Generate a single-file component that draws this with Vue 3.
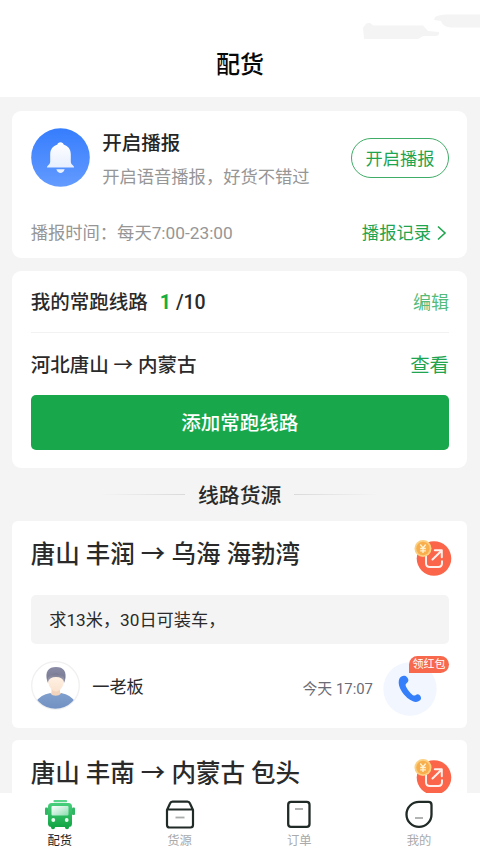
<script setup>
const loads = [
  { route: '唐山 丰润 → 乌海 海勃湾', note: '求13米，30日可装车，', name: '一老板', time: '今天 17:07' },
  { route: '唐山 丰南 → 内蒙古 包头', note: '', name: '', time: '' },
]
</script>

<template>
  <div class="screen">
    <header class="header">
      <svg class="smudge" width="118" height="30" viewBox="0 0 118 30">
        <path d="M73 3Q77 .5 84 .5H118V13.500H89Q81 13 79 7L72 6ZM3 11Q4 8.500 8 9L11 11.500H61L66 17L77 18Q78 21 74 22L61 22L56 25H2L1 14Z" fill="#f4f4f4" />
      </svg>
      <h1>配货</h1>
    </header>

    <main class="content">
      <section class="card broadcast">
        <div class="broadcast-top">
          <svg class="bell" width="59" height="59" viewBox="0 0 59 59">
            <defs>
              <linearGradient id="bellBg" x1="0" y1="0" x2="0" y2="1">
                <stop offset="0" stop-color="#367dfd" /><stop offset="1" stop-color="#639bff" />
              </linearGradient>
              <linearGradient id="bellFg" x1="0" y1="0" x2="0" y2="1">
                <stop offset="0" stop-color="#fff" /><stop offset="1" stop-color="#e7efff" />
              </linearGradient>
            </defs>
            <circle cx="29.500" cy="29.500" r="29.300" fill="url(#bellBg)" />
            <path d="M29.500 14.300c-1.700 0-2.800.9-3.100 2.300-4.600 1.400-7.200 5-7.200 9.600v7.300c0 1.800-.9 2.700-1.900 3.700-.9.800-1.300 1.400-1.400 2.200h27.200c-.1-.8-.5-1.400-1.400-2.200-1-1-1.900-1.900-1.900-3.700v-7.300c0-4.600-2.600-8.200-7.200-9.600-.3-1.400-1.400-2.300-3.100-2.300z" fill="url(#bellFg)" />
            <path d="M25.400 41.200h8.200c-.7 2.500-2.300 3.700-4.100 3.700s-3.400-1.200-4.100-3.700z" fill="#e9f0ff" />
          </svg>
          <div class="broadcast-copy">
            <h2>开启播报</h2>
            <p>开启语音播报，好货不错过</p>
          </div>
          <button class="pill">开启播报</button>
        </div>
        <div class="broadcast-foot">
          <span>播报时间：每天7:00-23:00</span>
          <a class="record">播报记录
            <svg width="10" height="16" viewBox="0 0 10 16"><path d="M1 1.500L8 8L1 14.500" fill="none" stroke="#1fa44f" stroke-width="1.600" /></svg>
          </a>
        </div>
      </section>

      <section class="card routes">
        <div class="routes-head">
          <h2>我的常跑线路<b>1</b><span>/10</span></h2>
          <a class="edit">编辑</a>
        </div>
        <div class="route-row">
          <span>河北唐山 → 内蒙古</span>
          <a>查看</a>
        </div>
        <button class="add">添加常跑线路</button>
      </section>

      <div class="divider"><i class="left"></i><h3>线路货源</h3><i class="right"></i></div>

      <article v-for="(load, i) in loads" :key="i" class="card load">
        <div class="load-head">
          <h2>{{ load.route }}</h2>
          <svg class="share" width="38" height="38" viewBox="0 0 38 38">
            <circle cx="20" cy="20.500" r="17.300" fill="#fb664a" />
            <path d="M12 17v8.300q0 3.700 3.700 3.700h8.600q3.700 0 3.700-3.700v-2" fill="none" stroke="#fff0ec" stroke-width="2" stroke-linecap="round" />
            <path d="M18.500 21.500L27.500 12.700M20.800 12.300h7v7" fill="none" stroke="#fff0ec" stroke-width="2" stroke-linecap="round" stroke-linejoin="round" />
            <circle cx="9" cy="10.500" r="8.500" fill="#fbd080" />
            <circle cx="9" cy="10.500" r="6.700" fill="#f9ae4d" />
            <path d="M6.300 6.500L9 10L11.700 6.500M9 10v5M6.200 10.500h5.600M6.200 12.800h5.600" fill="none" stroke="#fff3d3" stroke-width="1.300" />
          </svg>
        </div>
        <template v-if="load.name">
          <p class="note">{{ load.note }}</p>
          <div class="owner">
            <svg class="avatar" width="49" height="49" viewBox="0 0 49 49">
              <defs>
                <clipPath id="face"><circle cx="24.500" cy="24.500" r="23.300" /></clipPath>
                <linearGradient id="shirt" x1="0" y1="0" x2="0" y2="1"><stop offset="0" stop-color="#7f9fcd" /><stop offset="1" stop-color="#7190c2" /></linearGradient>
                <linearGradient id="hair" x1="0" y1="0" x2="0" y2="1"><stop offset="0" stop-color="#8a8ba6" /><stop offset="1" stop-color="#75778f" /></linearGradient>
                <linearGradient id="band" x1="0" y1="0" x2="0" y2="1"><stop offset="0" stop-color="#77788f" /><stop offset="1" stop-color="#a9a8bd" /></linearGradient>
                <linearGradient id="skin" x1="0" y1="0" x2="0" y2="1"><stop offset="0" stop-color="#fff1e3" /><stop offset="1" stop-color="#fae3cf" /></linearGradient>
              </defs>
              <circle cx="24.500" cy="24.500" r="23.800" fill="#fff" stroke="#f0f0f0" stroke-width="1.300" />
              <g clip-path="url(#face)">
                <path d="M4 42Q9 33.500 19.500 32L24.500 33.500L30 32Q40 33.500 45 42V49H4Z" fill="url(#shirt)" />
                <path d="M20.500 27h8.500v4.300l1 1.500Q28 34.800 24.700 34.800T19.500 32.800l1-1.500z" fill="#f3d5bd" />
                <path d="M16.300 20.500C13.500 10.500 17.500 6 25 6S36.500 10.500 33.700 20.500Z" fill="url(#hair)" />
                <path d="M16.500 21.500Q14.800 14 25 12.300Q35.200 14 33.500 21.500Z" fill="url(#band)" />
                <path d="M17 21Q18.500 16 25 16T33 21Q32.300 25.500 29.300 28.500Q25 32.500 20.700 28.500Q17.700 25.500 17 21Z" fill="url(#skin)" />
              </g>
            </svg>
            <span class="name">{{ load.name }}</span>
            <span class="time">{{ load.time }}</span>
            <div class="call">
              <svg width="54" height="54" viewBox="0 0 54 54">
                <circle cx="27" cy="27" r="26.700" fill="#f2f6ff" />
                <path d="M16.500 16.400C18.300 13.500 22 12.800 24 15.300C26.500 18.400 25.200 20 23.300 21.600C22.300 22.500 22.500 23.800 23.200 25.100C24.800 28.200 26.900 31 29.600 32.900C30.700 33.700 31.700 33.600 32.900 32.900C35 31.500 37.500 33 38 35.800C38.400 38 35.700 40 32.800 39.900C25.500 39.500 15.500 28.500 15.700 20.300C15.700 18.800 15.900 17.400 16.500 16.400Z" fill="#357ffb" />
              </svg>
              <span class="badge">领红包</span>
            </div>
          </div>
        </template>
      </article>
    </main>

    <nav class="tabs">
      <a class="tab active">
        <svg width="32" height="32" viewBox="0 0 32 32">
          <defs>
            <linearGradient id="bus" x1="0" y1="0" x2="0" y2="1"><stop offset="0" stop-color="#48cf7c" /><stop offset="1" stop-color="#12a544" /></linearGradient>
            <linearGradient id="glass" x1="0" y1="0" x2="1" y2="1"><stop offset="0" stop-color="#fff" /><stop offset="1" stop-color="#8addb0" /></linearGradient>
          </defs>
          <rect x="9.500" y="1" width="13.500" height="2.200" rx=".8" fill="#5bd58a" />
          <rect x="1" y="8.500" width="3" height="7.500" rx="1" fill="#31b763" />
          <rect x="28" y="8.500" width="3" height="7.500" rx="1" fill="#31b763" />
          <path d="M7 27h4v1.500q0 1.800-2 1.800t-2-1.800zM21 27h4v1.500q0 1.800-2 1.800t-2-1.800z" fill="#12a544" />
          <rect x="4" y="4" width="24" height="24" rx="3.500" fill="url(#bus)" />
          <rect x="7.500" y="7" width="17" height="9.500" rx="1" fill="url(#glass)" />
          <circle cx="9.300" cy="21" r="1.900" fill="#e8fff0" /><circle cx="22.700" cy="21" r="1.900" fill="#e8fff0" />
        </svg>
        <span>配货</span>
      </a>
      <a class="tab">
        <svg width="32" height="32" viewBox="0 0 32 32" fill="none" stroke="#202a27" stroke-width="2.200" stroke-linejoin="round">
          <path d="M3 11L6 4.500Q6.700 2.700 8.500 2.700H23.500Q25.300 2.700 26 4.500L29 11V26Q29 28.500 26.500 28.500H5.500Q3 28.500 3 26ZM3.500 10.500H28.500" /><path d="M11.500 18.500H20.500" stroke="#a9acab" stroke-width="1.800" />
        </svg>
        <span>货源</span>
      </a>
      <a class="tab">
        <svg width="32" height="32" viewBox="0 0 32 32" fill="none" stroke="#202a27" stroke-width="2.300">
          <rect x="5.200" y="2.900" width="21.300" height="25" rx="2.800" /><path d="M12 10H20" stroke="#a9acab" stroke-width="1.800" />
        </svg>
        <span>订单</span>
      </a>
      <a class="tab">
        <svg width="32" height="32" viewBox="0 0 32 32" fill="none" stroke="#202a27" stroke-width="2.300">
          <path d="M16 2.900H25.500Q28.500 2.900 28.500 5.900V15.400A12.500 12.500 0 1 1 16 2.900Z" /><path d="M12 19H20" stroke="#a9acab" stroke-width="1.800" />
        </svg>
        <span>我的</span>
      </a>
    </nav>
  </div>
</template>

<style>
body { margin: 0; background: #f4f4f4; }
</style>

<style scoped>
* { box-sizing: border-box; }
.screen {
  width: 480px; height: 853px; overflow: hidden; display: flex; flex-direction: column;
  background: #f4f4f4; color: #2a2a2a;
  font-family: Roboto, "Noto Sans CJK SC", sans-serif; white-space: nowrap;
}
h1, h2, h3, p { margin: 0; font-weight: 500; }
button { font-family: inherit; padding: 0; }
.header { position: relative; height: 97px; flex: none; background: #fff; display: flex; justify-content: center; padding-top: 47px; }
.header h1 { font-size: 24px; line-height: 36px; color: #080808; }
.smudge { position: absolute; right: 0; top: 14px; }
.content { flex: 1; min-height: 0; overflow: hidden; padding: 13.500px 13px 0 12.300px; }
.card { background: #fff; border-radius: 9px; padding: 0 18px 0 18.400px; }
.broadcast { height: 147.500px; padding-top: 17.500px; }
.broadcast-top { display: flex; height: 60px; }
.bell { flex: none; }
.broadcast-copy { flex: 1; margin-left: 12.500px; }
.broadcast-copy h2 { font-size: 19.500px; line-height: 28px; padding-top: 1.500px; color: #252525; }
.broadcast-copy p { font-size: 17.300px; line-height: 24px; margin-top: 7.500px; font-weight: 400; color: #969696; }
.pill { width: 98px; height: 39.500px; margin-top: 10px; border: 1.300px solid #40ad67; border-radius: 20px; background: #fff; color: #1fa44f; font-size: 17.200px; }
.broadcast-foot { display: flex; justify-content: space-between; margin-top: 33px; font-size: 17.300px; line-height: 24px; color: #969696; }
.record { color: #1fa44f; display: flex; align-items: center; gap: 6px; margin-right: 2px; }
.routes { height: 197.500px; margin-top: 12.500px; }
.routes-head { height: 62px; border-bottom: 1px solid #f2f2f2; display: flex; justify-content: space-between; align-items: center; }
.routes-head h2 { font-size: 19.500px; padding-bottom: 1px; }
.routes-head b { color: #14ae44; margin: 0 5px 0 12px; font-weight: 700; }
.edit { font-size: 18px; color: #55bb7b; }
.route-row { height: 62.500px; display: flex; justify-content: space-between; align-items: center; font-size: 19.500px; font-weight: 500; }
.route-row a { color: #1fa44f; font-size: 19.400px; font-weight: 400; }
.add { display: block; width: 100%; height: 55px; padding-bottom: 2px; border: 0; border-radius: 5px; background: #18a84b; color: #fff; font-size: 19.500px; font-weight: 500; }
.divider { height: 53px; display: flex; align-items: center; justify-content: center; gap: 13px; }
.divider h3 { font-size: 20.800px; line-height: 30px; padding-top: 2px; }
.divider i { width: 86px; height: 1.500px; }
.left { background: linear-gradient(90deg, #f4f4f4, #dadada); }
.right { background: linear-gradient(270deg, #f4f4f4, #dadada); }
.load { height: 207px; margin-bottom: 12px; border-radius: 6px; }
.load-head { height: 74px; display: flex; justify-content: space-between; padding-top: 17px; }
.load-head h2 { font-size: 24.500px; line-height: 33px; }
.share { flex: none; margin-right: -3px; }
.note { height: 49px; border-radius: 5px; background: #f4f4f4; padding-left: 18.500px; font-size: 17.200px; line-height: 51px; font-weight: 400; }
.owner { display: flex; align-items: center; margin-top: 16.500px; height: 50px; }
.name { font-size: 17.200px; margin-left: 12.500px; padding-bottom: 1px; }
.time { margin-left: auto; font-size: 14.900px; color: #6b6b75; padding-top: 4px; }
.call { position: relative; width: 54px; height: 54px; margin: 6px 12px 0 10px; }
.call svg { display: block; }
.badge { position: absolute; left: 26px; top: -6px; width: 40px; height: 17px; border-radius: 8.500px 8.500px 8.500px 0; background: #f7684d; color: #fff; font-size: 11px; line-height: 17px; text-align: center; }
.tabs { height: 60px; flex: none; background: #fff; display: grid; grid-template-columns: repeat(4, 1fr); padding-right: 1px; }
.tab { display: flex; flex-direction: column; align-items: center; padding-top: 6px; color: #aaa; font-size: 12.300px; line-height: 20px; }
.tab.active { color: #222; }
</style>
